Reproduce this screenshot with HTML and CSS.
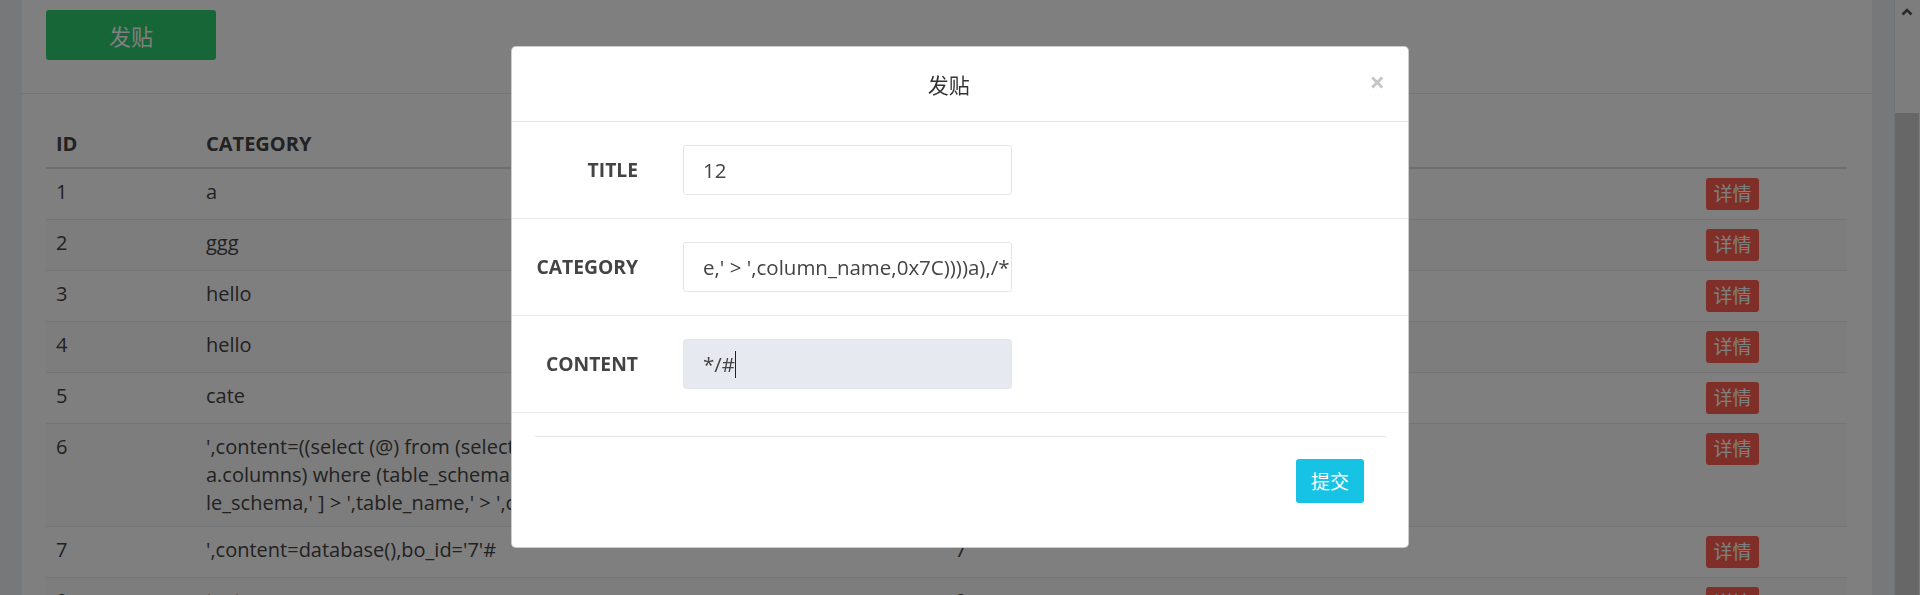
FILE: index.html
```html
<!DOCTYPE html>
<html lang="zh">
<head>
<meta charset="utf-8">
<title>发贴</title>
<link rel="stylesheet" href="styles.css">
</head>
<body>
<div class="page">
  <div class="gutter"></div>
  <main class="card">
    <div class="card-header">
      <button class="btn btn-green">发贴</button>
    </div>
    <div class="card-body">
      <table class="table">
        <colgroup>
          <col class="c-id"><col class="c-cat"><col class="c-num"><col class="c-act">
        </colgroup>
        <thead>
          <tr><th>ID</th><th>CATEGORY</th><th>BO_ID</th><th></th></tr>
        </thead>
        <tbody>
          <tr><td>1</td><td>a</td><td>1</td><td><span class="btn btn-red">详情</span></td></tr>
          <tr><td>2</td><td>ggg</td><td>2</td><td><span class="btn btn-red">详情</span></td></tr>
          <tr><td>3</td><td>hello</td><td>3</td><td><span class="btn btn-red">详情</span></td></tr>
          <tr><td>4</td><td>hello</td><td>4</td><td><span class="btn btn-red">详情</span></td></tr>
          <tr><td>5</td><td>cate</td><td>5</td><td><span class="btn btn-red">详情</span></td></tr>
          <tr><td>6</td><td><span class="line">',content=((select (@) from (select(@:=0x00),(select (@) from (information_schem</span><span class="line">a.columns) where (table_schema&gt;=@) and (@)in (@:=concat(@,0x0D,0x0A,' [ ',tab</span><span class="line">le_schema,' ] &gt; ',table_name,' &gt; ',column_name,0x7C))))a),/*</span></td><td>6</td><td><span class="btn btn-red">详情</span></td></tr>
          <tr><td>7</td><td>',content=database(),bo_id='7'#</td><td>7</td><td><span class="btn btn-red">详情</span></td></tr>
          <tr><td>8</td><td>test</td><td>8</td><td><span class="btn btn-red">详情</span></td></tr>
        </tbody>
      </table>
    </div>
  </main>
  <div class="gutter"></div>
  <div class="scrollbar">
    <div class="sb-arrow">
      <svg width="12" height="9" viewBox="0 0 12 9"><polyline points="1.5,7.5 6,3 10.5,7.5" fill="none" stroke="#555" stroke-width="2.6"/></svg>
    </div>
    <div class="sb-track"><div class="sb-thumb"></div></div>
  </div>
</div>

<div class="backdrop"></div>

<div class="modal-wrap">
  <div class="modal">
    <div class="modal-header">
      <h5 class="modal-title">发贴</h5>
      <span class="close">×</span>
    </div>
    <div class="form-row">
      <label class="form-label">TITLE</label>
      <div class="form-input">12</div>
    </div>
    <div class="form-row">
      <label class="form-label">CATEGORY</label>
      <div class="form-input">e,' &gt; ',column_name,0x7C))))a),/*</div>
    </div>
    <div class="form-row">
      <label class="form-label">CONTENT</label>
      <div class="form-input focused">*/#<span class="caret"></span></div>
    </div>
    <div class="modal-footer">
      <hr class="divider">
      <div class="footer-actions">
        <button class="btn btn-cyan">提交</button>
      </div>
    </div>
  </div>
</div>
</body>
</html>
```

FILE: styles.css
```css
* { box-sizing: border-box; }

html, body {
  margin: 0;
  padding: 0;
  height: 595px;
  overflow: hidden;
}

body {
  font-family: "Open Sans", "Noto Sans CJK SC", sans-serif;
  color: #444;
  background: #eef0f4;
}

.page {
  display: flex;
  height: 595px;
}

.gutter {
  width: 22px;
  flex: none;
  background: #eef0f4;
}

.card {
  flex: 1;
  background: #fff;
  display: flex;
  flex-direction: column;
  min-width: 0;
}

.card-header {
  padding: 10px 24px 33px;
  border-bottom: 1px solid #e6e6e6;
}

.btn {
  font-family: "Open Sans", "Noto Sans CJK SC", sans-serif;
  border: none;
  border-radius: 3px;
  color: #fff;
  display: inline-flex;
  align-items: center;
  justify-content: center;
}

.btn-green {
  width: 170px;
  height: 50px;
  background: #2ecc71;
  font-size: 22px;
}

.card-body {
  padding: 27px 25px 0 24px;
}

.table {
  width: 100%;
  border-collapse: collapse;
  table-layout: fixed;
  font-size: 20px;
  line-height: 28px;
}

.c-id { width: 150px; }
.c-cat { width: 749px; }
.c-num { width: 751px; }
.c-act { width: 151px; }

.table th {
  text-align: left;
  font-weight: 700;
  padding: 9px 10px;
  border-bottom: 2px solid #dcdde0;
}

.table td {
  padding: 9px 10px;
  vertical-align: top;
  border-bottom: 1px solid #e6e8ec;
  word-break: break-all;
}

.table .line {
  display: block;
  white-space: nowrap;
  overflow: hidden;
}

.table tbody tr:nth-child(even) td {
  background: #fafafa;
}

.btn-red {
  display: flex;
  width: 53px;
  height: 32px;
  background: #ff5f4f;
  font-size: 19px;
  line-height: 32px;
}

.scrollbar {
  width: 26px;
  flex: none;
  display: flex;
  flex-direction: column;
  background: #fbfbfb;
  border-left: 1px solid #e6e6e6;
}

.sb-arrow {
  height: 28px;
  display: flex;
  justify-content: center;
  padding-top: 7px;
  padding-right: 1px;
}

.sb-track {
  flex: 1;
  padding: 85px 1px 0 0;
  display: flex;
}

.sb-thumb {
  flex: 1;
  background: #cfcfcf;
}

.backdrop {
  position: fixed;
  inset: 0;
  background: rgba(0, 0, 0, 0.5);
}

.modal-wrap {
  position: fixed;
  inset: 0;
  display: flex;
  justify-content: center;
  align-items: flex-start;
  padding-top: 46px;
}

.modal {
  width: 898px;
  background: #fff;
  border: 1px solid rgba(0, 0, 0, 0.2);
  border-radius: 5px;
  display: flex;
  flex-direction: column;
}

.modal-header {
  height: 75px;
  border-bottom: 1px solid #e4e7ea;
  display: flex;
  align-items: center;
  padding: 0 23px 0 16px;
}

.modal-title {
  flex: 1;
  margin: 0;
  text-align: center;
  font-size: 21px;
  font-weight: 400;
  color: #333;
}

.close {
  font-size: 27px;
  font-weight: 700;
  color: #c6c6c6;
  line-height: 1;
  margin-top: -6px;
}

.form-row {
  height: 97px;
  border-bottom: 1px solid #e7eaf0;
  display: grid;
  grid-template-columns: 126px 329px;
  column-gap: 45px;
  align-items: center;
}

.form-label {
  text-align: right;
  font-weight: 700;
  font-size: 19.3px;
  color: #444;
  margin-top: -2px;
}

.form-input {
  height: 50px;
  border: 1px solid #e4e7ea;
  border-radius: 3px;
  padding: 0 19px;
  font-size: 20.5px;
  color: #444;
  display: flex;
  align-items: center;
  white-space: nowrap;
  overflow: hidden;
}

.form-input.focused {
  background: #e6e9ef;
}

.caret {
  display: inline-block;
  width: 1px;
  height: 27px;
  background: #222;
}

.modal-footer {
  padding: 23px 22px 44px 23px;
}

.divider {
  margin: 0;
  border: none;
  border-top: 1px solid #e5e5e5;
}

.footer-actions {
  display: flex;
  justify-content: flex-end;
  padding: 22px 22px 0 0;
}

.btn-cyan {
  width: 68px;
  height: 44px;
  background: #17c3e5;
  font-size: 19px;
}
```
